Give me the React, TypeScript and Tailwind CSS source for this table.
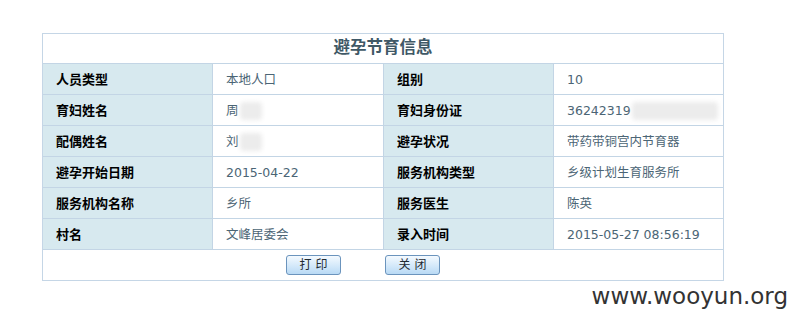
const rows: [string, React.ReactNode, string, React.ReactNode][] = [
  ['人员类型', '本地人口', '组别', '10'],
  ['育妇姓名', <Masked text="周" width="w-[22px]" />, '育妇身份证', <Masked text="36242319" width="w-[86px]" />],
  ['配偶姓名', <Masked text="刘" width="w-[22px]" />, '避孕状况', '带药带铜宫内节育器'],
  ['避孕开始日期', '2015-04-22', '服务机构类型', '乡级计划生育服务所'],
  ['服务机构名称', '乡所', '服务医生', '陈英'],
  ['村名', '文峰居委会', '录入时间', '2015-05-27 08:56:19'],
];

function Masked({ text, width }: { text: string; width: string }) {
  return (
    <span className="flex items-center">
      {text}
      <span className={`ml-px inline-block h-[18px] ${width} rounded-sm bg-[#ececec] blur-[2px]`} />
    </span>
  );
}

function Label({ children }: { children: React.ReactNode }) {
  return (
    <div className="flex items-center bg-[#d7e9ef] pl-[13px] pt-[2px] text-[13px] font-bold text-black">
      {children}
    </div>
  );
}

function Value({ children }: { children: React.ReactNode }) {
  return (
    <div className="flex items-center border-l border-[#c3d5e5] pl-[13px] pt-[2px] text-[12.5px] text-[#4b6575]">
      {children}
    </div>
  );
}

export default function App() {
  return (
    <div className="min-h-[325px] w-[798px] bg-white font-['DejaVu_Sans','Noto_Sans_CJK_SC',sans-serif]">
      <div className="h-[33px]" />

      {/* 信息表 */}
      <div className="ml-[42px] w-[682px] border border-[#c5d6e6] bg-white">
        <div className="flex h-[30px] items-center justify-center border-b border-[#c3d5e5] text-[16.5px] font-bold text-[#3f5866]">
          避孕节育信息
        </div>

        {rows.map(([l1, v1, l2, v2], i) => (
          <div
            key={i}
            className="grid h-[31px] grid-cols-[169px_171px_170px_1fr] border-b border-[#c3d5e5]"
          >
            <Label>{l1}</Label>
            <Value>{v1}</Value>
            <div className="flex border-l border-[#c3d5e5]">
              <div className="flex flex-1 items-center bg-[#d7e9ef] pl-[13px] pt-[2px] text-[13px] font-bold text-black">
                {l2}
              </div>
            </div>
            <Value>{v2}</Value>
          </div>
        ))}

        {/* 按钮 */}
        <div className="flex h-[30px] items-center gap-[44px] pl-[243px]">
          <button className="h-[20px] w-[55px] rounded-[3px] border border-[#6b94bd] bg-gradient-to-b from-[#f4faff] to-[#b9daf5] text-[12px] text-[#1f2a33]">
            打 印
          </button>
          <button className="h-[20px] w-[55px] rounded-[3px] border border-[#6b94bd] bg-gradient-to-b from-[#f4faff] to-[#b9daf5] text-[12px] text-[#1f2a33]">
            关 闭
          </button>
        </div>
      </div>

      {/* 水印 */}
      <div className="mt-[2px] flex justify-end pr-[10px]">
        <span className="text-[23px] leading-[26px] text-[#333]">www.wooyun.org</span>
      </div>
    </div>
  );
}
